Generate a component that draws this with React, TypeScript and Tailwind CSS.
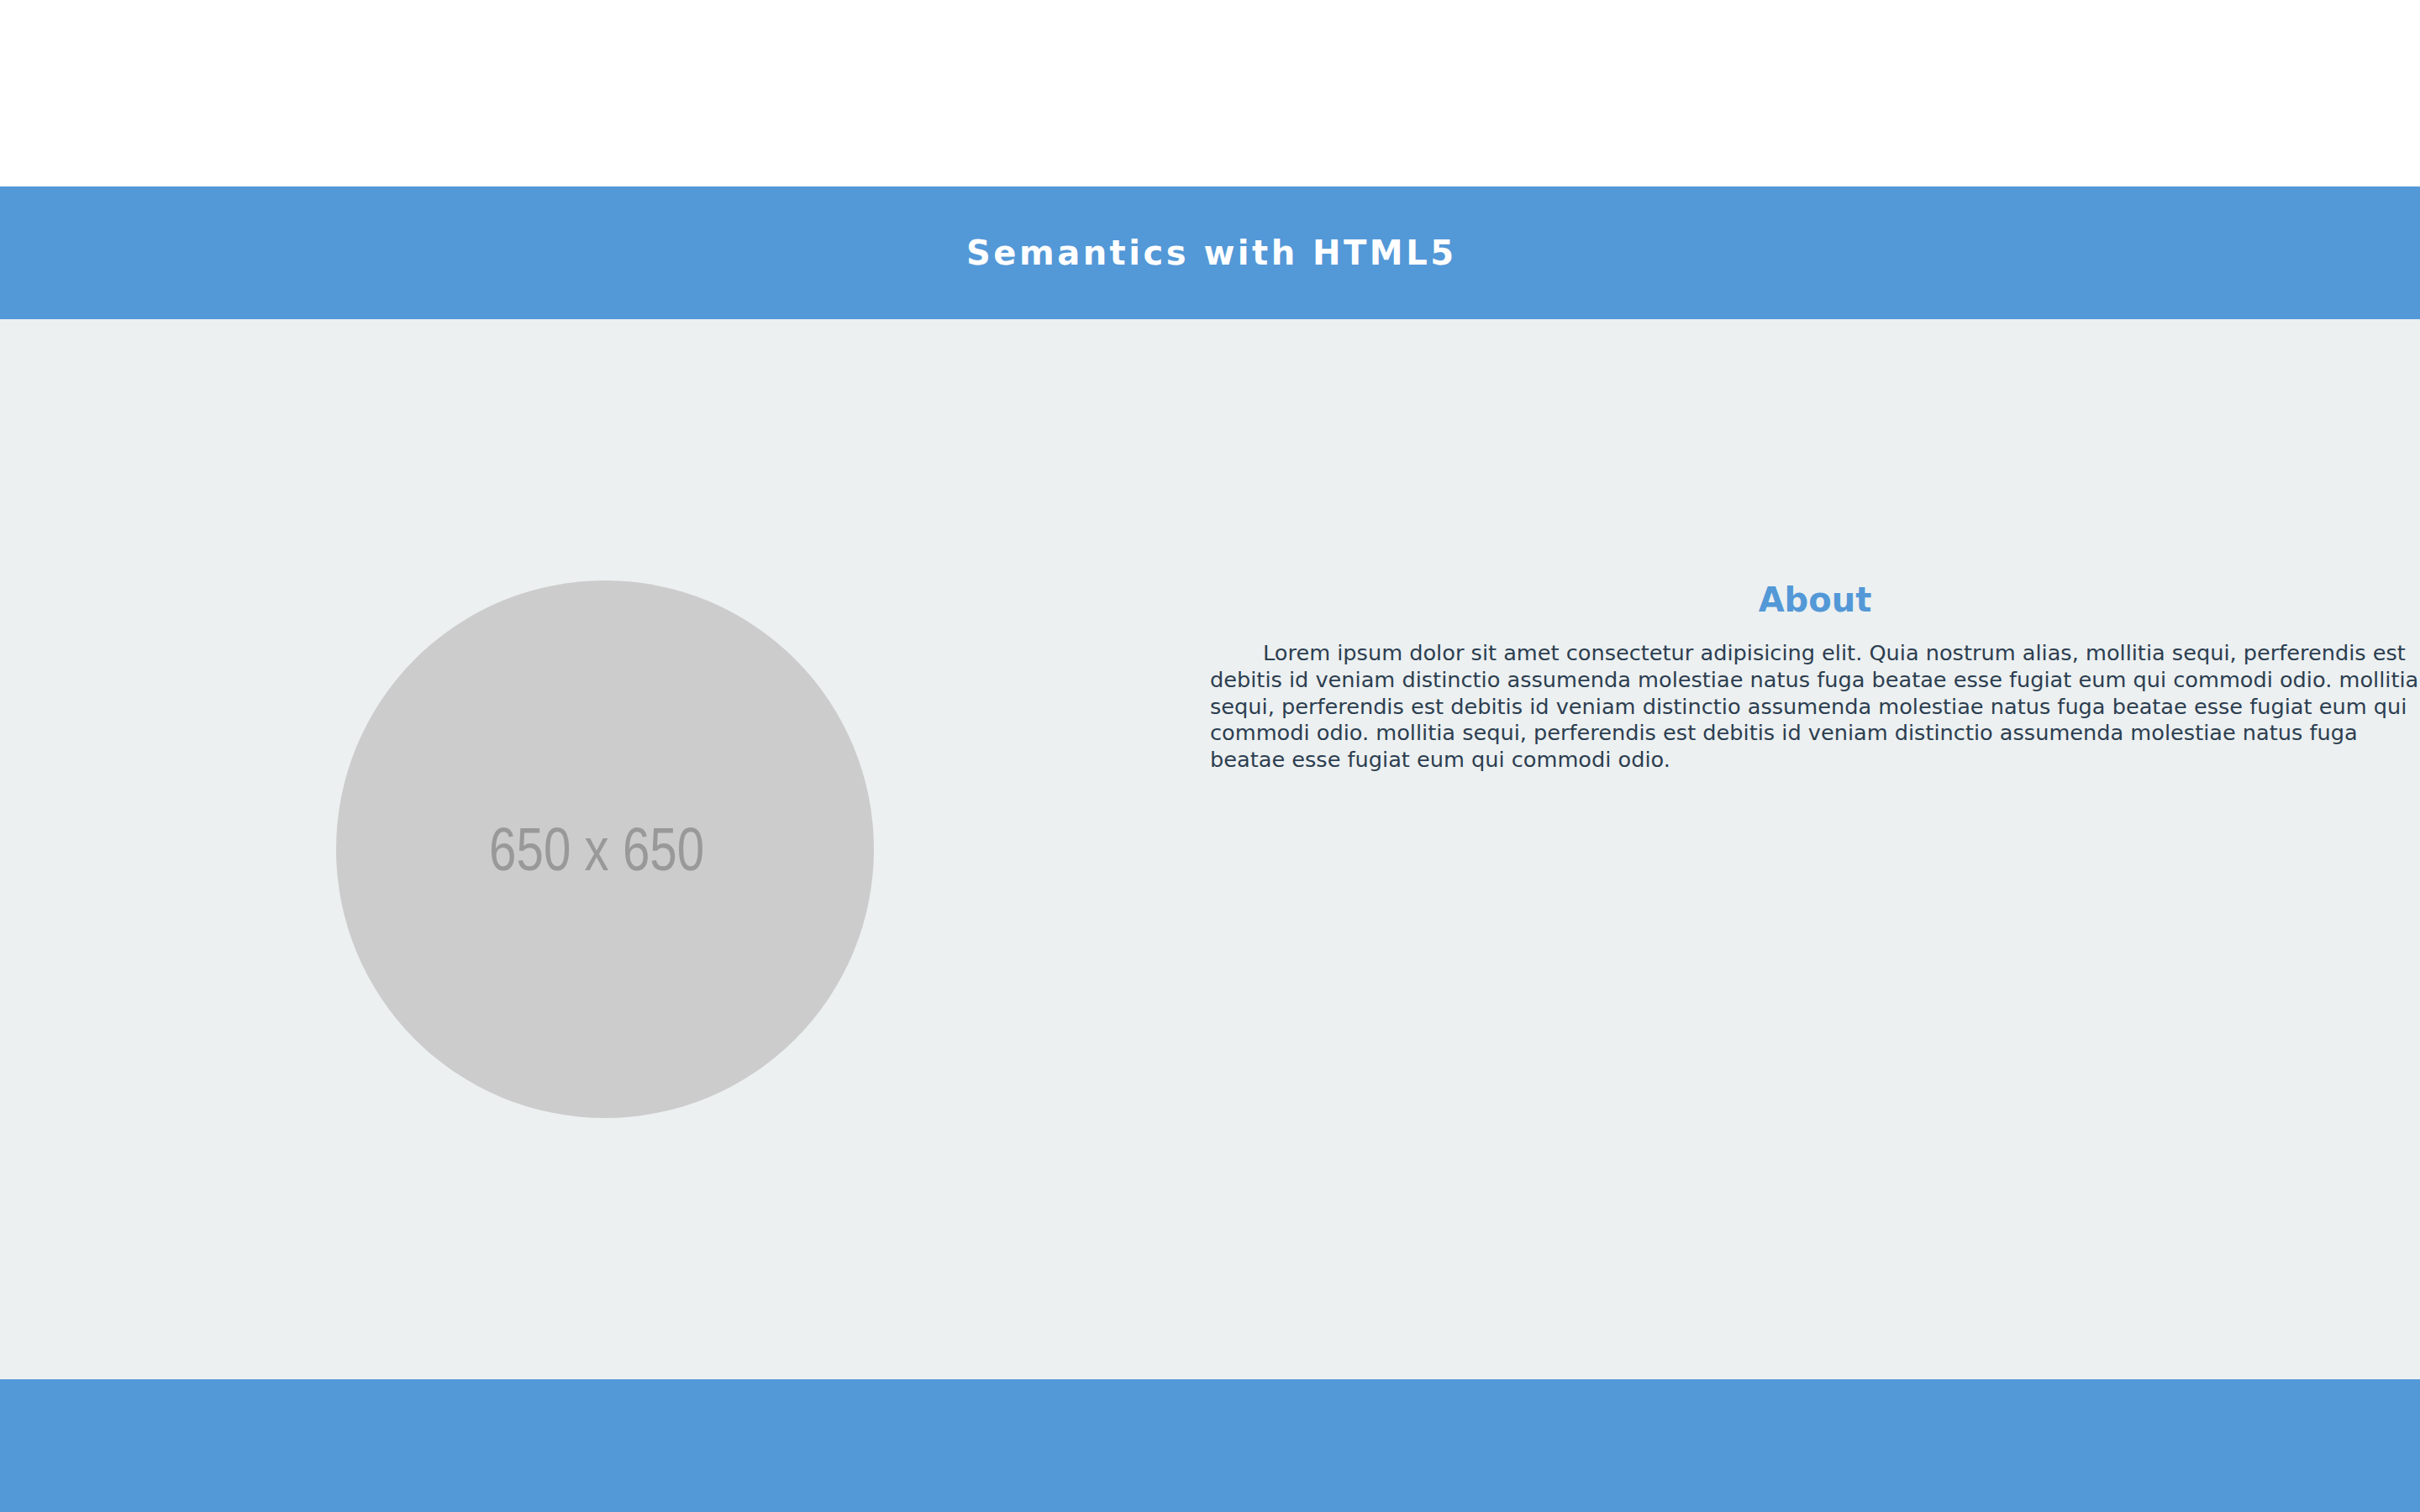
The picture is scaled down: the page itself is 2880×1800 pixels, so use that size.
export default function App() {
  return (
    <div className="min-h-screen flex flex-col font-['DejaVu_Sans',sans-serif]">
      {/* Empty top strip above the header */}
      <div className="h-[222px] bg-white" />

      {/* Page header */}
      <header className="h-[158px] bg-[#5398d7] flex items-center justify-center">
        <h1 className="text-white text-[40px] leading-[normal] font-bold tracking-[3.5px] pl-[3.5px]">
          Semantics with HTML5
        </h1>
      </header>

      {/* Main content: image on the left, about text on the right */}
      <main className="h-[1262px] bg-[#ecf0f1] grid grid-cols-2">
        <div className="flex items-center justify-center">
          <div className="w-[640px] h-[640px] rounded-full bg-[#cccccc] flex items-center justify-center">
            <span className="inline-block -ml-[20px] scale-x-[0.81] text-[72px] leading-none text-[#999999] font-['Liberation_Sans',Arial,sans-serif]">
              650 x 650
            </span>
          </div>
        </div>

        <section className="pt-[311px] text-[#2c3e50]">
          <h2 className="text-center text-[40px] leading-[normal] font-bold text-[#5398d7] mb-[25px]">
            About
          </h2>
          <p className="text-[25.6px] leading-[31.75px] indent-[63px]">
            Lorem ipsum dolor sit amet consectetur adipisicing elit. Quia nostrum alias, mollitia sequi, perferendis est
            debitis id veniam distinctio assumenda molestiae natus fuga beatae esse fugiat eum qui commodi odio. mollitia
            sequi, perferendis est debitis id veniam distinctio assumenda molestiae natus fuga beatae esse fugiat eum qui
            commodi odio. mollitia sequi, perferendis est debitis id veniam distinctio assumenda molestiae natus fuga
            beatae esse fugiat eum qui commodi odio.
          </p>
        </section>
      </main>

      {/* Page footer */}
      <footer className="h-[158px] bg-[#5398d7]" />
    </div>
  );
}
